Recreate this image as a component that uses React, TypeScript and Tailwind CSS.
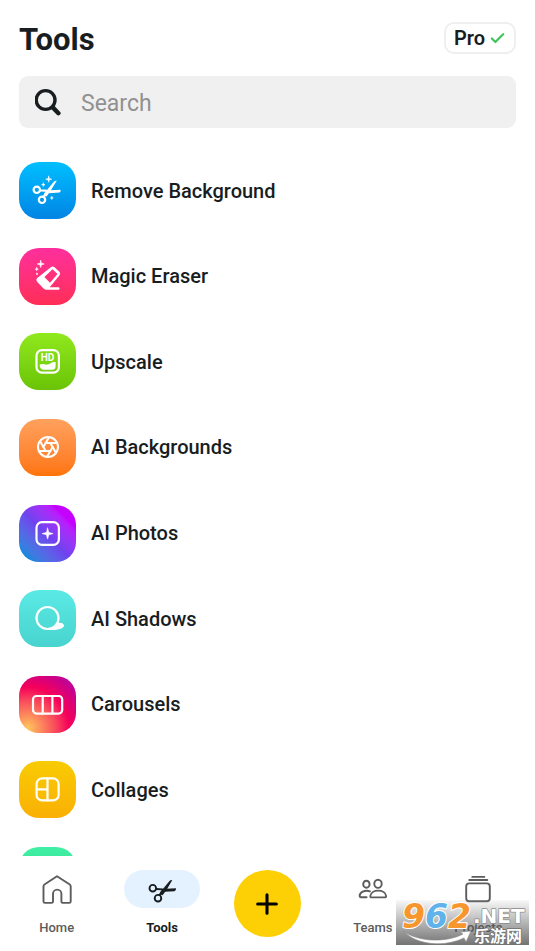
import type { ReactNode } from "react";
import { Aperture, Check, Plus } from "lucide-react";

function Star({ x, y, r }: { x: number; y: number; r: number }) {
  const k = r * 0.22;
  return (
    <path
      d={`M${x} ${y - r}L${x + k} ${y - k}L${x + r} ${y}L${x + k} ${y + k}L${x} ${y + r}L${x - k} ${y + k}L${x - r} ${y}L${x - k} ${y - k}Z`}
      fill="currentColor"
      stroke="currentColor"
      strokeWidth="0.6"
      strokeLinejoin="round"
    />
  );
}

function TileIcon({ children }: { children: ReactNode }) {
  return (
    <svg
      viewBox="0 0 57 57"
      className="size-full"
      fill="none"
      stroke="currentColor"
      strokeWidth="2.2"
      strokeLinecap="round"
      strokeLinejoin="round"
      aria-hidden="true"
    >
      {children}
    </svg>
  );
}

const tools = [
  {
    name: "Remove Background",
    tile: "bg-linear-to-b from-[#00bfff] to-[#0484e4]",
    icon: (
      <TileIcon>
        <circle cx="17.8" cy="27.8" r="3.2" />
        <circle cx="23" cy="37.8" r="3.2" />
        <path d="M21.3 28.5L27 28.7M24.5 34.8L28 29.5" />
        <path
          d="M25.5 31L34.6 20Q36 18.4 37.8 18.8L30.8 30L27.5 34.5L25.2 34Z"
          fill="currentColor"
          stroke="none"
        />
        <path
          d="M30.5 28.2L41.5 27.8Q42.4 29.6 40.5 30.6L29.8 31.2Z"
          fill="currentColor"
          stroke="none"
        />
        <Star x={29.7} y={17.2} r={3} />
        <Star x={24.3} y={22.7} r={1.7} />
        <Star x={32.8} y={36} r={1.5} />
      </TileIcon>
    ),
  },
  {
    name: "Magic Eraser",
    tile: "bg-linear-to-b from-[#ff2f9c] to-[#ff2d55]",
    icon: (
      <TileIcon>
        <path
          fillRule="evenodd"
          d="M31.8 19.2Q33.7 17.6 35.5 19.2L40.4 23.8Q42 25.6 40.4 27.5L30.7 39.3H40Q41.3 40.4 40 41.8H27Q25.5 41.5 24.5 40.5L18.5 34.2Q16.5 32 18 30.3ZM33.5 21.2L25.4 29L31 34.7L38.5 26Z"
          fill="currentColor"
          stroke="none"
        />
        <Star x={21.7} y={16} r={3.5} />
        <Star x={17.7} y={21.2} r={1.6} />
        <Star x={18} y={26} r={0.8} />
      </TileIcon>
    ),
  },
  {
    name: "Upscale",
    tile: "bg-linear-to-b from-[#90e91c] to-[#6ac406]",
    icon: (
      <TileIcon>
        <rect x="17.5" y="17.2" width="22.4" height="22.4" rx="5.5" />
        <text
          x="28.5"
          y="28"
          textAnchor="middle"
          fill="currentColor"
          stroke="none"
          fontSize="10"
          fontWeight="700"
        >
          HD
        </text>
        <path
          d="M20.6 31.8C23.5 30 25.5 32 28.5 31.6C32 31 31.5 29 36.6 29V33.2Q36.6 36.8 33 36.8H25Q20.8 36.8 20.6 31.8Z"
          fill="currentColor"
          stroke="none"
        />
      </TileIcon>
    ),
  },
  {
    name: "AI Backgrounds",
    tile: "bg-linear-to-b from-[#ffa15c] to-[#ff7403]",
    icon: <Aperture className="size-6" strokeWidth={2} aria-hidden="true" />,
  },
  {
    name: "AI Photos",
    tile: "bg-linear-to-tr from-[#0089dc] from-10% via-[#6f42ee] via-48% to-[#c400ff] to-80%",
    icon: (
      <TileIcon>
        <rect x="17.5" y="17.2" width="22.4" height="22.6" rx="5.5" />
        <Star x={28.6} y={28.6} r={5.5} />
      </TileIcon>
    ),
  },
  {
    name: "AI Shadows",
    tile: "bg-linear-to-b from-[#5aeae5] to-[#48d3ce]",
    icon: (
      <TileIcon>
        <circle cx="28.5" cy="28" r="11" />
        <path
          d="M29 39.2C34.5 38.6 38 36 39.3 32.7C43 32.5 45 33.8 45 35.5C45 38.8 37.5 40.6 29 39.8Z"
          fill="currentColor"
          stroke="none"
        />
      </TileIcon>
    ),
  },
  {
    name: "Carousels",
    tile: "bg-[radial-gradient(circle_at_15%_92%,#ffc75c_0%,#f9475c_40%,#f5005a_58%,#c8008c_82%,#a811b4_100%)]",
    icon: (
      <TileIcon>
        <rect x="14" y="20" width="29.2" height="17.6" rx="3.5" />
        <path d="M23.7 20V37.6M33.4 20V37.6" />
      </TileIcon>
    ),
  },
  {
    name: "Collages",
    tile: "bg-linear-to-b from-[#f8cb03] to-[#fab005]",
    icon: (
      <TileIcon>
        <rect x="17.6" y="17.4" width="22" height="22" rx="5.5" />
        <path d="M28.5 17.4V39.4M17.6 28.4H28.5" />
      </TileIcon>
    ),
  },
  {
    name: "",
    tile: "bg-linear-to-b from-[#40eea4] to-[#22d98b]",
    icon: null,
  },
];

function NavIcon({ children }: { children: ReactNode }) {
  return (
    <svg
      viewBox="0 0 38 38"
      className="size-[38px]"
      fill="none"
      stroke="currentColor"
      strokeWidth="1.9"
      strokeLinecap="round"
      strokeLinejoin="round"
      aria-hidden="true"
    >
      {children}
    </svg>
  );
}

const navItems = [
  {
    label: "Home",
    icon: (
      <NavIcon>
        <path d="M19 6.2L31.4 14.2Q32.7 15 32.7 16.4V31.4Q32.7 32.9 31.2 32.9H24.6Q23.4 32.9 23.4 31.4V23.8A4.2 4.2 0 0 0 15 23.8V31.4Q15 32.9 13.6 32.9H7Q5.5 32.9 5.5 31.4V16.4Q5.5 15 6.8 14.2Z" />
      </NavIcon>
    ),
  },
  {
    label: "Tools",
    active: true,
    icon: (
      <NavIcon>
        <circle cx="9.8" cy="18.2" r="3.3" />
        <circle cx="15" cy="28.2" r="3.3" />
        <path d="M13.2 19L19.5 19.4M16.5 25L20 20" />
        <path
          d="M17.2 22.3L26.5 11Q28 9.3 29.2 10.3L23.2 20.5L19.5 25.3L17.2 24.6Z"
          fill="currentColor"
          stroke="none"
        />
        <path
          d="M23 18.8L33 18.3Q33.4 20.3 31.5 21.2L21.7 21.8Z"
          fill="currentColor"
          stroke="none"
        />
      </NavIcon>
    ),
  },
  { label: "" },
  {
    label: "Teams",
    icon: (
      <NavIcon>
        <ellipse cx="12.4" cy="14.2" rx="3.2" ry="3.5" />
        <ellipse cx="24" cy="13.8" rx="3.7" ry="4.1" />
        <path d="M16 21.3C10.5 19.5 5.6 22.5 5.6 26.1Q5.6 27.2 6.8 27.2H12.6M17.6 27.4H30.8Q32.2 27.4 32.1 26C31.3 18.8 17.2 18.8 16.3 26Q16.2 27.4 17.6 27.4Z" />
      </NavIcon>
    ),
  },
  {
    label: "Projects",
    icon: (
      <NavIcon>
        <rect x="7.2" y="13.4" width="23.6" height="17.8" rx="3" />
        <path d="M10.3 10H28.3M13.3 6.9H25.3" />
      </NavIcon>
    ),
  },
];

function SiteBadge() {
  return (
    <div className="absolute right-1.5 bottom-1.5 h-[45px] w-[133px] bg-linear-to-b from-[#c0c0c0]/10 to-[#505050]/80">
      <svg viewBox="0 0 133 45" className="size-full overflow-visible">
        <path
          d="M7 31C22 42 50 43 67 34L64 32L75 31L70 42L68 38C49 47 22 46 7 31Z"
          fill="#fff"
          stroke="#888"
          strokeWidth="0.6"
        />
        <g strokeLinejoin="round" paintOrder="stroke">
          <text
            x="6"
            y="28"
            fontSize="33"
            className="font-['DejaVu_Sans',sans-serif] font-bold italic"
            stroke="#fff"
            strokeWidth="2"
          >
            <tspan fill="#f8962e">9</tspan>
            <tspan fill="#5fb2ea">6</tspan>
            <tspan fill="#f8962e">2</tspan>
          </text>
          <text
            x="77"
            y="23"
            fontSize="20"
            className="font-['DejaVu_Sans',sans-serif] font-bold"
            fill="#fff"
            stroke="#8c8c8c"
            strokeWidth="1.4"
          >
            .NET
          </text>
          <text
            x="78"
            y="42"
            fontSize="16"
            className="font-['Noto_Sans_CJK_SC',sans-serif] font-bold"
            fill="#fff"
            stroke="#707070"
            strokeWidth="1.4"
          >
            乐游网
          </text>
        </g>
      </svg>
    </div>
  );
}

export default function App() {
  return (
    <div className="relative flex h-screen flex-col overflow-hidden bg-white font-[Roboto,sans-serif] text-[#181d1f]">
      <header className="px-[19px] pt-[22px]">
        <div className="flex items-start justify-between">
          <h1 className="text-[31px] leading-9 font-bold">Tools</h1>
          <button className="flex h-8 items-center gap-1 rounded-[10px] border-2 border-[#efefef] px-2 text-xl font-semibold">
            Pro
            <Check className="size-[17px] text-[#3cc35c]" strokeWidth={3} />
          </button>
        </div>
        <label className="mt-[18px] flex h-13 items-center gap-[18px] rounded-[9px] bg-[#f0f0f0] px-4">
          <svg
            viewBox="0 0 28 28"
            className="size-7 shrink-0"
            fill="none"
            stroke="currentColor"
            strokeLinecap="round"
            aria-hidden="true"
          >
            <circle cx="10.6" cy="12" r="9.4" strokeWidth="3.4" />
            <path d="M18 19.6L23.4 25.2" strokeWidth="4.4" />
          </svg>
          <input
            type="search"
            aria-label="Search"
            placeholder="Search"
            className="min-w-0 flex-1 bg-transparent pt-1 text-[23px] outline-none placeholder:text-[#919191]"
          />
        </label>
      </header>

      <main className="flex min-h-0 flex-1 flex-col overflow-hidden px-[19px] pt-[34px]">
        {/* last row runs under the tab bar */}
        <ul className="-mb-12 flex flex-1 flex-col justify-between">
          {tools.map((tool, i) => (
            <li key={i}>
              <a href="#" className="flex items-center gap-[15px]">
                <span
                  className={`flex size-[57px] shrink-0 items-center justify-center rounded-[20px] text-white ${tool.tile}`}
                >
                  {tool.icon}
                </span>
                <span className="text-xl font-medium">{tool.name}</span>
              </a>
            </li>
          ))}
        </ul>
      </main>

      <nav className="relative grid h-[95px] shrink-0 grid-cols-5 bg-white px-1 pt-3.5">
        {navItems.map((item) =>
          item.label ? (
            <a
              key={item.label}
              href="#"
              className={`flex flex-col items-center gap-2.5 text-[13px] leading-5 ${
                item.active ? "font-bold" : "font-medium text-[#5c5c5c]"
              }`}
            >
              <span
                className={`flex w-19 justify-center rounded-full ${item.active ? "bg-[#e4f2ff]" : ""}`}
              >
                {item.icon}
              </span>
              {item.label}
            </a>
          ) : (
            <button
              key="create"
              aria-label="Create"
              className="flex size-[67px] items-center justify-center justify-self-center rounded-full bg-[#fdd005] text-black"
            >
              <Plus className="size-8" strokeWidth={2.3} />
            </button>
          ),
        )}
      </nav>
      <SiteBadge />
    </div>
  );
}
